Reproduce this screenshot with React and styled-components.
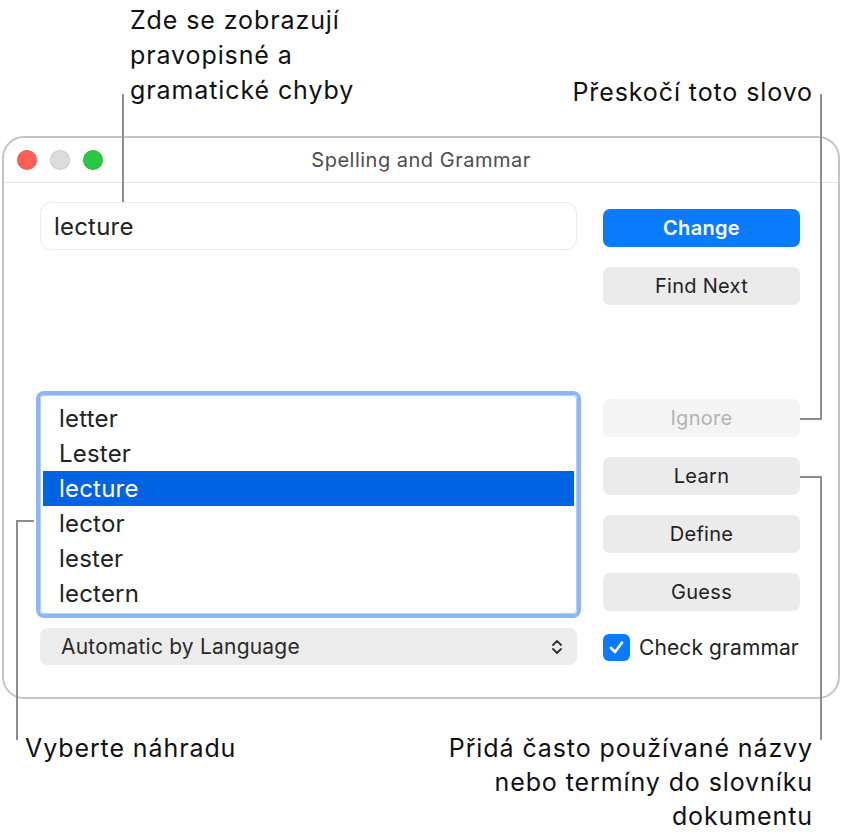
import styled, { createGlobalStyle } from "styled-components";

const GlobalStyle = createGlobalStyle`
  html, body {
    margin: 0;
    padding: 0;
    background: #fff;
  }
  body {
    font-family: Inter, "Noto Sans", "Liberation Sans", sans-serif;
    -webkit-font-smoothing: antialiased;
  }
`;

const Page = styled.div`
  position: relative;
  width: 843px;
  height: 835px;
  overflow: hidden;
  background: #fff;
`;

const NotesTop = styled.div`
  display: flex;
  justify-content: space-between;
  align-items: flex-start;
  height: 136px;
  padding-top: 3px;
  box-sizing: border-box;
`;

const NotesBottom = styled.div`
  display: flex;
  justify-content: space-between;
  align-items: flex-start;
  margin-top: 32px;
`;

const Note = styled.div`
  font-size: 25px;
  letter-spacing: 0.9px;
  line-height: ${(p) => p.$lh || 35}px;
  color: #111;
  text-align: ${(p) => p.$align || "left"};
  padding-left: ${(p) => p.$pl || 0}px;
  padding-right: ${(p) => p.$pr || 0}px;
  margin-top: ${(p) => p.$mt || 0}px;
`;

const Leader = styled.div`
  position: absolute;
  left: ${(p) => p.$x}px;
  top: ${(p) => p.$y}px;
  width: ${(p) => p.$w}px;
  height: ${(p) => p.$h}px;
  background: #8d8d8d;
  z-index: 5;
`;

const Window = styled.div`
  margin-left: 2px;
  width: 838px;
  height: 563px;
  box-sizing: border-box;
  border: 2px solid #c4c4c4;
  border-radius: 22px;
  background: #fff;
  display: flex;
  flex-direction: column;
`;

const TitleBar = styled.div`
  display: grid;
  grid-template-columns: 1fr auto 1fr;
  align-items: center;
  height: 44px;
  padding: 0 13px;
  border-bottom: 1px solid #e6e6e6;
`;

const Lights = styled.div`
  display: flex;
  gap: 13px;
`;

const Light = styled.span`
  width: 20px;
  height: 20px;
  border-radius: 50%;
  background: ${(p) => p.$color};
  box-shadow: inset 0 0 0 1px rgba(0, 0, 0, 0.08);
`;

const Title = styled.div`
  font-size: 20px;
  color: #4d4d4d;
  letter-spacing: 0.5px;
`;

const Body = styled.div`
  display: grid;
  grid-template-columns: 537px 197px;
  column-gap: 26px;
  padding: 19px 0 0 36px;
`;

const Column = styled.div`
  display: flex;
  flex-direction: column;
`;

const WordField = styled.div`
  height: 48px;
  box-sizing: border-box;
  border: 1px solid #ececec;
  border-radius: 11px;
  padding-left: 13px;
  display: flex;
  align-items: center;
  font-size: 24px;
  letter-spacing: 0.2px;
  color: #222;
`;

const Suggestions = styled.div`
  margin-top: 145px;
  box-sizing: border-box;
  height: 219px;
  padding: 5px 2px 2px;
  border: 1px solid #b6cdf3;
  border-radius: 4px;
  box-shadow: 0 0 0 4px #8db6f9;
  display: flex;
  flex-direction: column;
`;

const Suggestion = styled.div`
  height: 35px;
  padding-left: 16px;
  display: flex;
  align-items: center;
  font-size: 24px;
  letter-spacing: 0.2px;
  color: ${(p) => (p.$selected ? "#fff" : "#222")};
  background: ${(p) => (p.$selected ? "#0063e1" : "transparent")};
`;

const Popup = styled.div`
  margin-top: 14px;
  height: 37px;
  border-radius: 8px;
  background: #ececec;
  display: flex;
  align-items: center;
  justify-content: space-between;
  padding: 0 14px 0 21px;
  font-size: 21px;
  letter-spacing: 0.2px;
  color: #2a2a2a;
`;

const Button = styled.div`
  height: 38px;
  margin-top: ${(p) => p.$gap}px;
  border-radius: 7px;
  display: flex;
  align-items: center;
  justify-content: center;
  font-size: 20px;
  letter-spacing: 0.3px;
  font-weight: ${(p) => (p.$primary ? 600 : 400)};
  color: ${(p) => (p.$primary ? "#fff" : p.$disabled ? "#b3b3b3" : "#222")};
  background: ${(p) => (p.$primary ? "#0a7aff" : p.$disabled ? "#f4f4f4" : "#ebebeb")};
`;

const CheckRow = styled.label`
  margin-top: 23px;
  display: flex;
  align-items: center;
  gap: 9px;
  font-size: 21px;
  letter-spacing: 0.1px;
  color: #222;
  white-space: nowrap;
`;

const Box = styled.span`
  width: 27px;
  height: 27px;
  border-radius: 6px;
  background: #0a7aff;
  display: flex;
  align-items: center;
  justify-content: center;
`;

const words = ["letter", "Lester", "lecture", "lector", "lester", "lectern"];

export default function App() {
  return (
    <Page>
      <GlobalStyle />
      <NotesTop>
        <Note $pl={130}>
          Zde se zobrazují
          <br />
          pravopisné a
          <br />
          gramatické chyby
        </Note>
        <Note $align="right" $pr={30} $mt={72}>
          Přeskočí toto slovo
        </Note>
      </NotesTop>

      <Window>
        <TitleBar>
          <Lights>
            <Light $color="#fe5f57" />
            <Light $color="#dcdcdc" />
            <Light $color="#2ac840" />
          </Lights>
          <Title>Spelling and Grammar</Title>
          <span />
        </TitleBar>
        <Body>
          <Column>
            <WordField>lecture</WordField>
            <Suggestions>
              {words.map((w, i) => (
                <Suggestion key={w} $selected={i === 2}>
                  {w}
                </Suggestion>
              ))}
            </Suggestions>
            <Popup>
              Automatic by Language
              <svg width="12" height="18" viewBox="0 0 12 18">
                <path
                  d="M2 7 L6 3 L10 7 M2 11 L6 15 L10 11"
                  fill="none"
                  stroke="#333"
                  strokeWidth="1.8"
                  strokeLinecap="round"
                  strokeLinejoin="round"
                />
              </svg>
            </Popup>
          </Column>
          <Column>
            <Button $primary $gap={7}>Change</Button>
            <Button $gap={20}>Find Next</Button>
            <Button $disabled $gap={94}>Ignore</Button>
            <Button $gap={20}>Learn</Button>
            <Button $gap={20}>Define</Button>
            <Button $gap={20}>Guess</Button>
            <CheckRow>
              <Box>
                <svg width="17" height="17" viewBox="0 0 17 17">
                  <path
                    d="M3 9 L7 13 L14 3.5"
                    fill="none"
                    stroke="#fff"
                    strokeWidth="2.6"
                    strokeLinecap="round"
                    strokeLinejoin="round"
                  />
                </svg>
              </Box>
              Check grammar
            </CheckRow>
          </Column>
        </Body>
      </Window>

      <NotesBottom>
        <Note $pl={25} $lh={34}>
          Vyberte náhradu
        </Note>
        <Note $align="right" $pr={30} $lh={34}>
          Přidá často používané názvy
          <br />
          nebo termíny do slovníku
          <br />
          dokumentu
        </Note>
      </NotesBottom>

      {/* callout leaders */}
      <Leader $x={122} $y={94} $w={2} $h={108} />
      <Leader $x={820} $y={94} $w={2} $h={326} />
      <Leader $x={800} $y={418} $w={22} $h={2} />
      <Leader $x={800} $y={476} $w={22} $h={2} />
      <Leader $x={820} $y={476} $w={2} $h={264} />
      <Leader $x={16} $y={520} $w={18} $h={2} />
      <Leader $x={16} $y={520} $w={2} $h={220} />
    </Page>
  );
}
